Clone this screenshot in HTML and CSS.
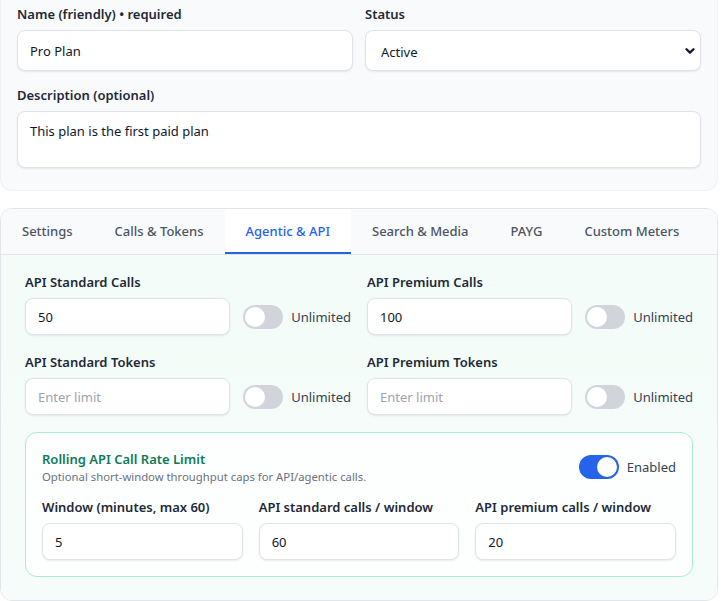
FILE: index.html
```html
<!DOCTYPE html>
<html lang="en">
<head>
<meta charset="utf-8">
<title>Plan editor</title>
<link rel="stylesheet" href="styles.css">
</head>
<body>
<div class="page">
  <section class="basics">
    <div class="grid2">
      <div class="field">
        <label class="label">Name (friendly) • required</label>
        <input class="input tall" type="text" value="Pro Plan">
      </div>
      <div class="field">
        <label class="label">Status</label>
        <div class="select-wrap">
          <select class="input tall select"><option>Active</option></select>
          <svg class="chev" width="10" height="8" viewBox="0 0 10 8"><path d="M1.5 2.2 L5 5.6 L8.5 2.2" fill="none" stroke="#111827" stroke-width="2.2" stroke-linecap="round" stroke-linejoin="round"/></svg>
        </div>
      </div>
    </div>
    <div class="field desc">
      <label class="label">Description (optional)</label>
      <textarea class="input textarea">This plan is the first paid plan</textarea>
    </div>
  </section>

  <section class="card">
    <nav class="tabs">
      <div class="tab">Settings</div>
      <div class="tab">Calls &amp; Tokens</div>
      <div class="tab active">Agentic &amp; API</div>
      <div class="tab">Search &amp; Media</div>
      <div class="tab">PAYG</div>
      <div class="tab">Custom Meters</div>
    </nav>
    <div class="panel">
      <div class="limits">
        <div class="field">
          <label class="label">API Standard Calls</label>
          <div class="limit-row">
            <input class="input" type="text" value="50">
            <span class="switch"><span class="knob"></span></span>
            <span class="switch-label">Unlimited</span>
          </div>
        </div>
        <div class="field">
          <label class="label">API Premium Calls</label>
          <div class="limit-row">
            <input class="input" type="text" value="100">
            <span class="switch"><span class="knob"></span></span>
            <span class="switch-label">Unlimited</span>
          </div>
        </div>
        <div class="field">
          <label class="label">API Standard Tokens</label>
          <div class="limit-row">
            <input class="input" type="text" placeholder="Enter limit">
            <span class="switch"><span class="knob"></span></span>
            <span class="switch-label">Unlimited</span>
          </div>
        </div>
        <div class="field">
          <label class="label">API Premium Tokens</label>
          <div class="limit-row">
            <input class="input" type="text" placeholder="Enter limit">
            <span class="switch"><span class="knob"></span></span>
            <span class="switch-label">Unlimited</span>
          </div>
        </div>
      </div>

      <div class="rolling">
        <div class="rolling-head">
          <div>
            <div class="rolling-title">Rolling API Call Rate Limit</div>
            <div class="rolling-sub">Optional short-window throughput caps for API/agentic calls.</div>
          </div>
          <div class="toggle-group">
            <span class="switch on"><span class="knob"></span></span>
            <span class="switch-label">Enabled</span>
          </div>
        </div>
        <div class="grid3">
          <div class="field">
            <label class="label">Window (minutes, max 60)</label>
            <input class="input" type="text" value="5">
          </div>
          <div class="field">
            <label class="label">API standard calls / window</label>
            <input class="input" type="text" value="60">
          </div>
          <div class="field">
            <label class="label">API premium calls / window</label>
            <input class="input" type="text" value="20">
          </div>
        </div>
      </div>
    </div>
  </section>
</div>
</body>
</html>
```

FILE: styles.css
```css
* { box-sizing: border-box; }
html, body { margin: 0; padding: 0; background: #ffffff; }
body {
  font-family: "Noto Sans", "Open Sans", sans-serif;
  font-size: 13px;
  color: #111827;
  overflow: hidden;
}
.page {
  width: 718px;
  display: flex;
  flex-direction: column;
  gap: 17px;
}
.basics {
  background: #f9fafb;
  border: 1px solid #f0f1f3;
  border-top: none;
  border-radius: 0 0 12px 12px;
  padding: 4px 16px 22px;
  display: flex;
  flex-direction: column;
  gap: 14px;
}
.grid2 {
  display: grid;
  grid-template-columns: 1fr 1fr;
  gap: 12px;
}
.field {
  display: flex;
  flex-direction: column;
  gap: 6px;
  min-width: 0;
}
.label {
  font-size: 13px;
  line-height: 20px;
  font-weight: 600;
  color: #1f2937;
}
.input {
  font-family: inherit;
  font-size: 13px;
  color: #111827;
  background: #ffffff;
  border: 1px solid #dfe3e8;
  border-radius: 8px;
  box-shadow: 0 1px 2px rgba(15, 23, 42, 0.08);
  height: 37px;
  padding: 0 12px;
  width: 100%;
  min-width: 0;
  outline: none;
}
.input::placeholder { color: #9ca3af; }
.tall { height: 41px; }
.select-wrap { position: relative; }
.select {
  appearance: none;
  -webkit-appearance: none;
  padding: 2px 15px 0;
}
.chev {
  position: absolute;
  right: 6px;
  top: 17px;
}
.textarea {
  height: 57px;
  padding: 9px 12px;
  line-height: 20px;
  resize: none;
}
.card {
  border: 1px solid #e2e6eb;
  border-radius: 12px;
  overflow: hidden;
  height: 393px;
}
.tabs {
  display: flex;
  background: #f9fafb;
  border-bottom: 1px solid #e2e6eb;
  height: 46px;
}
.tab {
  padding: 0 21px;
  line-height: 44px;
  font-size: 13px;
  font-weight: 500;
  color: #4b5563;
  white-space: nowrap;
  border-bottom: 2px solid transparent;
}
.tab.active {
  background: #ffffff;
  color: #2563eb;
  border-bottom-color: #2563eb;
}
.panel {
  background: linear-gradient(180deg, #f3fcf8 0%, #f7fcfb 100%);
  padding: 17px 24px 24px;
  height: 100%;
  display: flex;
  flex-direction: column;
  gap: 17px;
}
.limits {
  display: grid;
  grid-template-columns: 1fr 1fr;
  column-gap: 16px;
  row-gap: 17px;
}
.limit-row {
  display: flex;
  align-items: center;
}
.limit-row .input { flex: 1; margin-right: 13px; }
.switch {
  position: relative;
  flex: none;
  width: 40px;
  height: 24px;
  border-radius: 12px;
  background: #d1d5db;
}
.switch .knob {
  position: absolute;
  top: 2px;
  left: 2px;
  width: 20px;
  height: 20px;
  border-radius: 50%;
  background: #ffffff;
}
.switch.on { background: #2563eb; }
.switch.on .knob { left: 18px; }
.switch-label {
  margin-left: 8px;
  font-size: 13px;
  color: #374151;
  white-space: nowrap;
}
.rolling {
  border: 1px solid #a7eed0;
  border-radius: 12px;
  background: rgba(255, 255, 255, 0.75);
  padding: 16px;
  display: flex;
  flex-direction: column;
  gap: 12px;
}
.rolling-head {
  display: flex;
  align-items: center;
  justify-content: space-between;
}
.rolling-title {
  font-size: 13px;
  line-height: 20px;
  font-weight: 600;
  color: #0f7a57;
}
.rolling-sub {
  font-size: 11.3px;
  line-height: 16px;
  color: #6b7280;
}
.toggle-group {
  display: flex;
  align-items: center;
}
.grid3 {
  display: grid;
  grid-template-columns: 1fr 1fr 1fr;
  gap: 16px;
}
```
